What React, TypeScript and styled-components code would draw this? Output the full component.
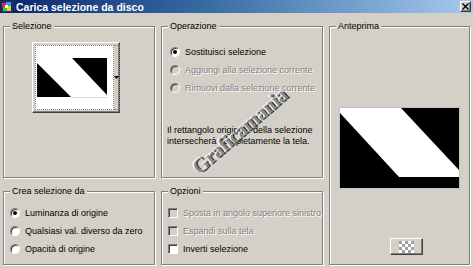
import styled, { createGlobalStyle } from 'styled-components';

const GlobalStyle = createGlobalStyle`
  html, body {
    margin: 0;
    padding: 0;
    background: #d4d0c8;
    overflow: hidden;
  }
  * {
    box-sizing: border-box;
  }
`;

const uiFont = `"Liberation Sans", Arial, sans-serif`;

const Window = styled.div`
  position: relative;
  width: 473px;
  height: 268px;
  display: flex;
  flex-direction: column;
  background: #d4d0c8;
  font-family: ${uiFont};
  font-size: 9px;
  color: #000;
  overflow: hidden;
`;

const TitleBar = styled.div`
  height: 13px;
  display: flex;
  align-items: center;
  padding: 0 2px 0 1px;
  background: linear-gradient(to right, #0a246a 0%, #3a6ea5 45%, #a6caf0 100%);
`;

const TitleText = styled.span`
  flex: 1;
  margin-left: 3px;
  color: #fff;
  font-weight: bold;
  font-size: 10.5px;
  line-height: 12px;
  white-space: nowrap;
`;

const CloseButton = styled.button`
  width: 11px;
  height: 11px;
  padding: 0;
  display: flex;
  align-items: center;
  justify-content: center;
  background: #d4d0c8;
  border: 1px solid;
  border-color: #fff #404040 #404040 #fff;
  box-shadow: inset -1px -1px 0 #808080;
`;

const Body = styled.div`
  flex: 1;
  display: grid;
  grid-template-columns: 152px 162px 141px;
  grid-template-rows: 158px 80px;
  column-gap: 6px;
  row-gap: 7px;
  padding: 7px 0 0 3px;
`;

const Group = styled.fieldset<{ $col: number; $row: string }>`
  margin: 0;
  padding: 0;
  min-width: 0;
  border: 1px solid #808080;
  box-shadow: inset 1px 1px 0 #fff, 1px 1px 0 #fff;
  grid-column: ${(p) => p.$col};
  grid-row: ${(p) => p.$row};
  display: flex;
  flex-direction: column;
`;

const Legend = styled.legend`
  margin-left: 6px;
  padding: 0 2px;
  line-height: 12px;
  font-size: 9px;
  background: #d4d0c8;
`;

const GroupContent = styled.div<{ $top: number; $left: number }>`
  flex: 1;
  display: flex;
  flex-direction: column;
  padding: ${(p) => `${p.$top}px 0 0 ${p.$left}px`};
`;

const ThumbButton = styled.div`
  width: 88px;
  height: 71px;
  display: flex;
  padding: 2px;
  background: #d4d0c8;
  border: 1px solid;
  border-color: #fff #404040 #404040 #fff;
  box-shadow: inset -1px -1px 0 #808080;
`;

const ThumbImage = styled.div`
  flex: 1;
  display: flex;
  border: 1px dotted #808080;
  background: #fff;
`;

const ThumbArrow = styled.div`
  width: 7px;
  display: flex;
  align-items: center;
  justify-content: center;
  border: 1px dotted #808080;
  border-left: none;
`;

const OptionRow = styled.label`
  height: 18px;
  display: flex;
  align-items: center;
  gap: 5px;
  white-space: nowrap;
`;

const OptionText = styled.span<{ $disabled?: boolean }>`
  color: ${(p) => (p.$disabled ? '#808080' : '#000')};
  text-shadow: ${(p) => (p.$disabled ? '1px 1px 0 #fff' : 'none')};
`;

const Radio = styled.span<{ $checked?: boolean; $disabled?: boolean }>`
  position: relative;
  width: 10px;
  height: 10px;
  flex: none;
  border-radius: 50%;
  border: 1px solid;
  border-color: #808080 #fff #fff #808080;
  box-shadow: inset 1px 1px 0 #404040;
  background: ${(p) => (p.$disabled ? '#d4d0c8' : '#fff')};

  &::after {
    content: '';
    display: ${(p) => (p.$checked ? 'block' : 'none')};
    position: absolute;
    left: 2px;
    top: 2px;
    width: 4px;
    height: 4px;
    border-radius: 50%;
    background: #000;
  }
`;

const CheckBox = styled.span<{ $disabled?: boolean }>`
  width: 10px;
  height: 10px;
  flex: none;
  border: 1px solid;
  border-color: #808080 #fff #fff #808080;
  box-shadow: inset 1px 1px 0 #404040;
  background: ${(p) => (p.$disabled ? '#d4d0c8' : '#fff')};
`;

const Note = styled.p`
  margin: 28px 0 0 -3px;
  line-height: 11px;
  white-space: nowrap;
`;

const PreviewFrame = styled.div`
  align-self: center;
  width: 121px;
  height: 82px;
  border: 1px solid #c0c0c0;
  display: flex;
`;

const PreviewToggle = styled.div`
  align-self: center;
  margin: 49px 0 0 14px;
  width: 33px;
  height: 17px;
  display: flex;
  align-items: center;
  justify-content: center;
  background: #d4d0c8;
  border: 1px solid;
  border-color: #fff #404040 #404040 #fff;
  box-shadow: inset -1px -1px 0 #808080;
`;

const Watermark = styled.span`
  position: absolute;
  left: 240px;
  top: 131px;
  transform: translate(-50%, -50%) rotate(-41deg);
  font-family: "Liberation Serif", "Times New Roman", serif;
  font-weight: bold;
  font-size: 20px;
  color: #8a8a8a;
  text-shadow: -1px -1px 0 #fff, 1px 1px 0 #222;
  pointer-events: none;
  white-space: nowrap;
`;

const AppIcon = () => (
  <svg width='12' height='11' viewBox='0 0 12 11'>
    <rect x='0' y='0' width='12' height='11' fill='#2a2a6a' />
    <rect x='1' y='2' width='4' height='4' fill='#e03020' />
    <rect x='5' y='1' width='5' height='4' fill='#30a0e0' />
    <rect x='2' y='6' width='4' height='4' fill='#40c040' />
    <rect x='6' y='5' width='4' height='5' fill='#f0d020' />
    <rect x='4' y='4' width='3' height='3' fill='#ffffff' />
  </svg>
);

const CloseGlyph = () => (
  <svg width='7' height='7' viewBox='0 0 7 7'>
    <path d='M0.5 0.5 L6.5 6.5 M6.5 0.5 L0.5 6.5' stroke='#000' strokeWidth='1.4' />
  </svg>
);

const ThumbDrawing = () => (
  <svg width='77' height='63' viewBox='0 0 77 63'>
    <polygon points='1,17 1,51 35,51' fill='#000' />
    <polygon points='36,12 71,12 71,49' fill='#000' />
    <line x1='35' y1='51.5' x2='72' y2='51.5' stroke='#dcdcdc' strokeWidth='1' />
  </svg>
);

const PreviewDrawing = () => (
  <svg width='119' height='80' viewBox='0 0 119 80'>
    <rect width='119' height='80' fill='#000' />
    <polygon points='0,0 61,0 119,62 119,69 59,69 0,5' fill='#fff' />
  </svg>
);

const ChessIcon = () => (
  <svg width='15' height='12' viewBox='0 0 15 12'>
    <rect width='15' height='12' fill='#fff' />
    {[0, 1, 2, 3].map((r) =>
      [0, 1, 2, 3, 4].map((c) =>
        (r + c) % 2 === 0 ? (
          <rect key={`${r}-${c}`} x={c * 3} y={r * 3} width='3' height='3' fill='#a0a0a0' />
        ) : null
      )
    )}
  </svg>
);

const DropArrow = () => (
  <svg width='5' height='3' viewBox='0 0 5 3'>
    <polygon points='0,0 5,0 2.5,3' fill='#000' />
  </svg>
);

const operations = [
  { label: 'Sostituisci selezione', checked: true, disabled: false },
  { label: 'Aggiungi alla selezione corrente', checked: false, disabled: true },
  { label: 'Rimuovi dalla selezione corrente', checked: false, disabled: true },
];

const sources = [
  { label: 'Luminanza di origine', checked: true },
  { label: 'Qualsiasi val. diverso da zero', checked: false },
  { label: 'Opacità di origine', checked: false },
];

const options = [
  { label: 'Sposta in angolo superiore sinistro', disabled: true },
  { label: 'Espandi sulla tela', disabled: true },
  { label: 'Inverti selezione', disabled: false },
];

const App = () => {
  return (
    <>
      <GlobalStyle />
      <Window>
        <TitleBar>
          <AppIcon />
          <TitleText>Carica selezione da disco</TitleText>
          <CloseButton type='button'>
            <CloseGlyph />
          </CloseButton>
        </TitleBar>
        <Body>
          <Group $col={1} $row='1'>
            <Legend>Selezione</Legend>
            <GroupContent $top={10} $left={28}>
              <ThumbButton>
                <ThumbImage>
                  <ThumbDrawing />
                </ThumbImage>
                <ThumbArrow>
                  <DropArrow />
                </ThumbArrow>
              </ThumbButton>
            </GroupContent>
          </Group>

          <Group $col={2} $row='1'>
            <Legend>Operazione</Legend>
            <GroupContent $top={11} $left={8}>
              {operations.map((op) => (
                <OptionRow key={op.label}>
                  <Radio $checked={op.checked} $disabled={op.disabled} />
                  <OptionText $disabled={op.disabled}>{op.label}</OptionText>
                </OptionRow>
              ))}
              <Note>
                Il rettangolo originale della selezione
                <br />
                intersecherà completamente la tela.
              </Note>
            </GroupContent>
          </Group>

          <Group $col={3} $row='1 / span 2'>
            <Legend>Anteprima</Legend>
            <GroupContent $top={75} $left={0}>
              <PreviewFrame>
                <PreviewDrawing />
              </PreviewFrame>
              <PreviewToggle>
                <ChessIcon />
              </PreviewToggle>
            </GroupContent>
          </Group>

          <Group $col={1} $row='2'>
            <Legend>Crea selezione da</Legend>
            <GroupContent $top={7} $left={6}>
              {sources.map((src) => (
                <OptionRow key={src.label}>
                  <Radio $checked={src.checked} />
                  <OptionText>{src.label}</OptionText>
                </OptionRow>
              ))}
            </GroupContent>
          </Group>

          <Group $col={2} $row='2'>
            <Legend>Opzioni</Legend>
            <GroupContent $top={7} $left={6}>
              {options.map((opt) => (
                <OptionRow key={opt.label}>
                  <CheckBox $disabled={opt.disabled} />
                  <OptionText $disabled={opt.disabled}>{opt.label}</OptionText>
                </OptionRow>
              ))}
            </GroupContent>
          </Group>
        </Body>
        <Watermark>Graficamania</Watermark>
      </Window>
    </>
  );
};

export default App;
